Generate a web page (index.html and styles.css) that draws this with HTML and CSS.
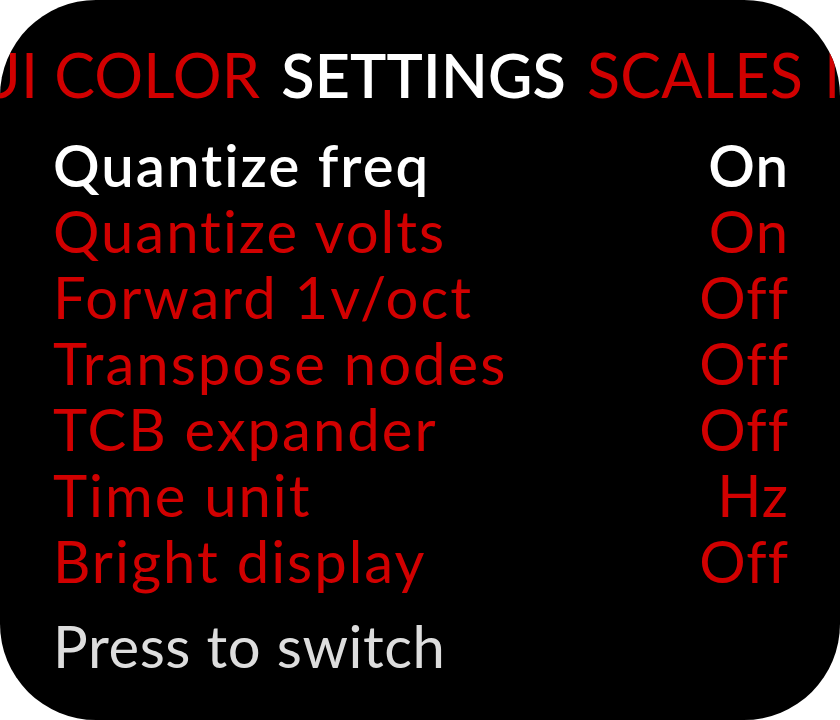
FILE: index.html
```html
<!DOCTYPE html>
<html>
<head>
<meta charset="utf-8">
<link rel="stylesheet" href="styles.css">
</head>
<body>
<div class="screen">
  <div class="tabs">
    <span class="tab">UI COLOR</span>
    <span class="tab active">SETTINGS</span>
    <span class="tab">SCALES</span>
    <span class="tab">MIDI</span>
  </div>
  <div class="list">
    <div class="row selected"><span class="label">Quantize freq</span><span class="value">On</span></div>
    <div class="row"><span class="label">Quantize volts</span><span class="value">On</span></div>
    <div class="row"><span class="label">Forward 1v/oct</span><span class="value">Off</span></div>
    <div class="row"><span class="label">Transpose nodes</span><span class="value">Off</span></div>
    <div class="row"><span class="label">TCB expander</span><span class="value">Off</span></div>
    <div class="row"><span class="label">Time unit</span><span class="value">Hz</span></div>
    <div class="row"><span class="label">Bright display</span><span class="value">Off</span></div>
  </div>
  <div class="hint">Press to switch</div>
</div>
</body>
</html>
```
FILE: styles.css
```css
html, body {
  margin: 0;
  padding: 0;
  background: #ffffff;
}
.screen {
  width: 840px;
  height: 720px;
  background: #000000;
  border-radius: 96px;
  overflow: hidden;
  font-family: Lato, "Noto Sans", sans-serif;
  font-variant-ligatures: none;
  font-weight: 400;
  box-sizing: border-box;
  padding-top: 45px;
}
.tabs {
  display: flex;
  gap: 21px;
  white-space: nowrap;
  font-size: 61px;
  line-height: 60px;
  color: #d10000;
  margin-left: -24px;
  letter-spacing: 0.2px;
}
.tab {
  flex: none;
}
.tab.active {
  color: #ffffff;
  font-weight: 600;
}
.list {
  margin-top: 27px;
  padding: 0 52px 0 53px;
}
.row {
  display: flex;
  justify-content: space-between;
  font-size: 58px;
  line-height: 66px;
  color: #d10000;
  letter-spacing: 2px;
}
.value {
  letter-spacing: 1px;
  margin-right: -1px;
}
.row.selected {
  color: #ffffff;
  font-weight: 600;
  letter-spacing: 2px;
}
.hint {
  margin-top: 19px;
  padding-left: 53px;
  font-size: 58px;
  line-height: 66px;
  color: #dddddd;
  letter-spacing: 0.6px;
}
```
